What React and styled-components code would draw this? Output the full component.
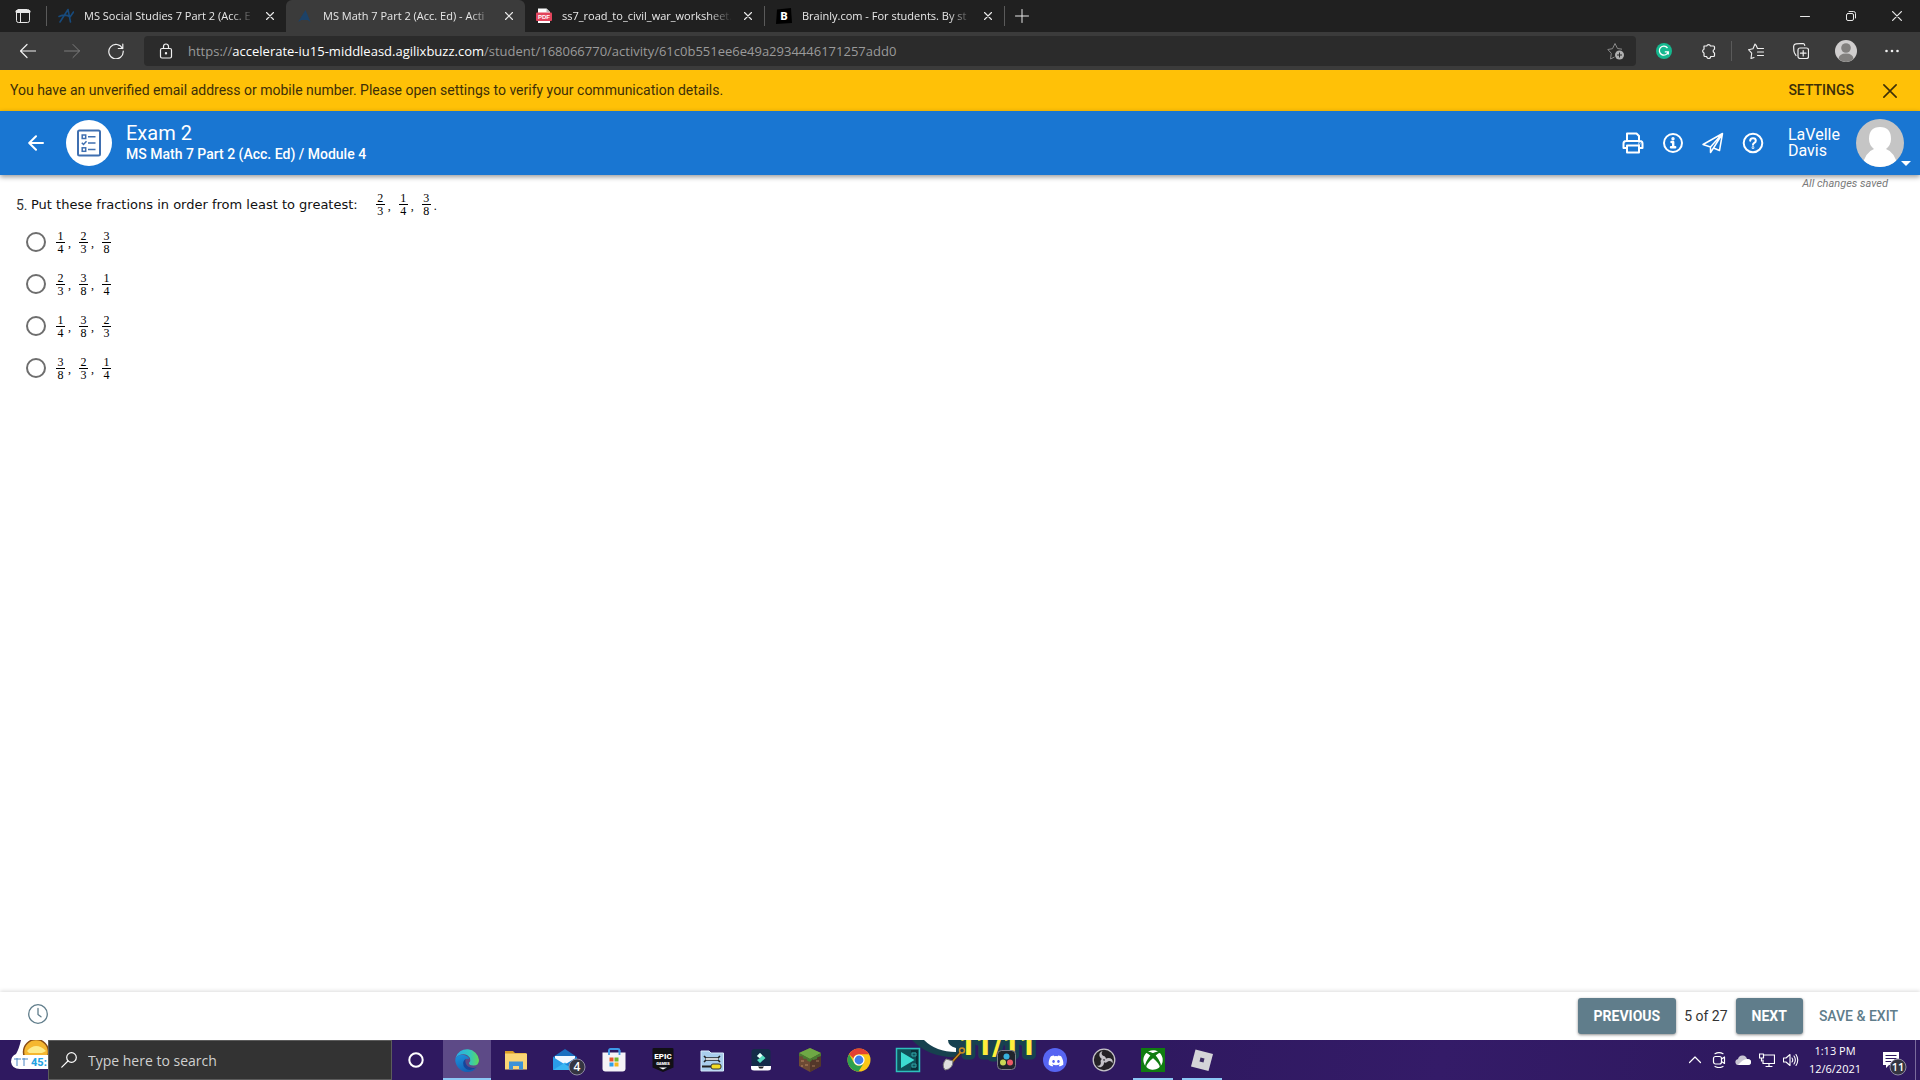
import { useState } from "react";
import styled, { createGlobalStyle } from "styled-components";
import { FaDiscord, FaXbox } from "react-icons/fa";

const colors = {
  strip: "#202020",
  chrome: "#3b3b3b",
  field: "#2b2b2b",
  yellow: "#ffc107",
  blue: "#1976d2",
  slate: "#607d8b",
  purple: "#2f1960",
};

const fonts = {
  system: `"Open Sans", "Noto Sans", sans-serif`,
  app: `Roboto, "Liberation Sans", sans-serif`,
  question: `"DejaVu Sans", sans-serif`,
  math: `"Liberation Serif", serif`,
};

const GlobalStyle = createGlobalStyle`
  * {
    box-sizing: border-box;
  }
  body {
    margin: 0;
    background: white;
    font-family: ${fonts.app};
  }
  button {
    border: 0;
    padding: 0;
    margin: 0;
    background: none;
    color: inherit;
    font: inherit;
    cursor: pointer;
  }
  svg {
    display: block;
  }
`;

const Page = styled.div`
  min-height: 100vh;
  display: flex;
  flex-direction: column;
`;

const IconButton = styled.button`
  width: ${(props) => props.$w || 32}px;
  height: ${(props) => props.$h || 32}px;
  flex: none;
  display: flex;
  align-items: center;
  justify-content: center;
`;

/* Browser */

const TabStrip = styled.div`
  height: 32px;
  display: flex;
  align-items: center;
  background: ${colors.strip};
  color: #e8e8e8;
  font-family: ${fonts.system};
`;
const Tab = styled.div`
  width: 239px;
  height: 32px;
  display: flex;
  align-items: center;
  padding-left: 11px;
  background: ${(props) => (props.$active ? colors.chrome : "transparent")};
  border-radius: ${(props) => (props.$active ? "6px 6px 0 0" : "0")};
`;
const TabTitle = styled.a`
  flex: 1;
  min-width: 0;
  margin-left: 10px;
  white-space: nowrap;
  color: inherit;
  text-decoration: none;
  font-size: 11px;
  line-height: 20px;
  mask-image: linear-gradient(to right, black 86%, transparent 100%);
`;
const Divider = styled.div`
  width: 1px;
  height: 20px;
  flex: none;
  background: #5a5a5a;
`;
const WindowControls = styled.div`
  display: flex;
  margin-left: auto;
`;
const Toolbar = styled.div`
  height: 38px;
  display: flex;
  align-items: center;
  padding-left: 6px;
  background: ${colors.chrome};
  color: #f0f0f0;
`;
const Address = styled.div`
  flex: 1;
  height: 30px;
  display: flex;
  align-items: center;
  margin-left: 6px;
  padding: 0 8px 0 14px;
  border-radius: 4px;
  background: ${colors.field};
`;
const Url = styled.div`
  flex: 1;
  margin-left: 14px;
  color: #9a9a9a;
  font-family: ${fonts.system};
  font-size: 13px;
  line-height: 20px;
  white-space: nowrap;
  b {
    font-weight: 400;
    color: white;
  }
`;
const Extensions = styled.div`
  display: flex;
  align-items: center;
  padding: 0 6px 0 5px;
`;

/* Exam page */

const Notice = styled.div`
  height: 41px;
  display: flex;
  align-items: center;
  padding: 0 14px 0 10px;
  background: ${colors.yellow};
  color: #3d2f08;
  font-size: 14px;
`;
const NoticeText = styled.div`
  flex: 1;
  padding-bottom: 2px;
`;
const SettingsButton = styled.button`
  margin-right: 20px;
  padding-bottom: 2px;
  font-size: 14px;
  font-weight: 500;
`;
const Header = styled.header`
  position: relative;
  height: 64px;
  display: flex;
  align-items: center;
  padding: 0 16px 0 20px;
  background: ${colors.blue};
  color: white;
  box-shadow: 0 2px 5px rgba(0, 0, 0, 0.4);
`;
const ActivityBadge = styled.div`
  width: 46px;
  height: 46px;
  margin: 0 14px;
  border-radius: 50%;
  display: flex;
  align-items: center;
  justify-content: center;
  background: white;
`;
const Headings = styled.div`
  flex: 1;
`;
const Title = styled.h1`
  margin: 0;
  font-size: 20px;
  line-height: 22px;
  font-weight: 400;
`;
const Subtitle = styled.div`
  font-size: 14px;
  line-height: 20px;
  font-weight: 500;
`;
const HeaderActions = styled.div`
  display: flex;
  margin-right: 15px;
`;
const UserName = styled.div`
  width: 68px;
  font-size: 16px;
  line-height: 16px;
`;
const UserButton = styled.button`
  position: relative;
  width: 48px;
  height: 48px;
`;
const Caret = styled.span`
  position: absolute;
  right: -7px;
  bottom: 1px;
  border: 5px solid transparent;
  border-top-color: white;
  border-bottom: 0;
`;
const Content = styled.main`
  flex: 1;
  padding: 0 16px;
`;
const SaveState = styled.div`
  padding-right: 16px;
  text-align: right;
  font-size: 11px;
  line-height: 18px;
  font-style: italic;
  color: #7a7a7a;
`;
const Question = styled.fieldset`
  margin: 0;
  padding: 0;
  border: 0;
`;
const Prompt = styled.legend`
  height: 23px;
  display: flex;
  align-items: center;
  padding: 0;
  font-family: ${fonts.question};
  font-size: 13px;
  color: #111;
  white-space: pre;
`;
const PromptNumber = styled.span`
  width: 15px;
  font-family: ${fonts.app};
  font-size: 14px;
  color: #333;
`;
const PromptMath = styled.span`
  margin-left: 18px;
`;
const Option = styled.label`
  width: max-content;
  height: 42px;
  display: flex;
  align-items: center;
  gap: 10px;
  padding-left: 10px;
`;
const Options = styled.div`
  padding-top: 5px;
`;
const Radio = styled.input`
  appearance: none;
  width: 20px;
  height: 20px;
  margin: 0;
  border: 2px solid #6e6e6e;
  border-radius: 50%;
  &:checked {
    background: radial-gradient(${colors.blue} 5px, transparent 6px);
  }
`;
const MathRow = styled.span`
  display: flex;
  align-items: center;
  font-family: ${fonts.math};
  font-size: 12px;
  line-height: 12px;
  color: black;
`;
const FractionBox = styled.span`
  width: 9px;
  display: flex;
  flex-direction: column;
  text-align: center;
  span:first-child {
    border-bottom: 1px solid black;
  }
`;
const Mark = styled.span`
  width: 14px;
  padding: 2px 0 0 3px;
`;
const Footer = styled.footer`
  height: 48px;
  display: flex;
  align-items: center;
  padding: 0 22px 0 28px;
  box-shadow: 0 -1px 4px rgba(0, 0, 0, 0.14);
  color: ${colors.slate};
  font-size: 14px;
`;
const Timer = styled.div`
  padding-bottom: 4px;
`;
const FooterNav = styled.nav`
  display: flex;
  align-items: center;
  margin-left: auto;
`;
const NavButton = styled.button`
  height: 36px;
  padding: 0 16px;
  border-radius: 3px;
  background: ${colors.slate};
  color: white;
  font-weight: 700;
  box-shadow: 0 1px 3px rgba(0, 0, 0, 0.45);
`;
const Progress = styled.span`
  padding: 0 8px;
  color: #333;
`;
const ExitButton = styled.button`
  margin-left: 16px;
  font-weight: 500;
`;

/* Taskbar */

const Taskbar = styled.div`
  position: relative;
  height: 40px;
  display: flex;
  overflow: hidden;
  background: linear-gradient(100deg, #2f1960 0 60%, #341b68 75%, #2f1960 90%);
  color: white;
  font-family: ${fonts.system};
`;
const Wallpaper = styled.svg`
  position: absolute;
  left: 0;
  top: 0;
`;
const SearchBox = styled.label`
  width: 344px;
  display: flex;
  align-items: center;
  gap: 11px;
  margin-left: 48px;
  padding-left: 12px;
  border: 1px solid #5c5c5c;
  background: #333;
  z-index: 1;
`;
const SearchInput = styled.input`
  width: 280px;
  border: 0;
  padding: 0;
  outline: 0;
  background: none;
  color: white;
  font-family: ${fonts.system};
  font-size: 14px;
  &::placeholder {
    color: #d0d0d0;
  }
`;
const Apps = styled.div`
  display: flex;
  gap: 1px;
  z-index: 1;
`;
const AppButton = styled.button`
  width: 48px;
  height: 40px;
  display: flex;
  align-items: center;
  justify-content: center;
  background: ${(props) => (props.$active ? "#5d4a87" : "none")};
  box-shadow: ${(props) => (props.$active ? "inset 0 -2px #8cc8f5" : "none")};
`;
const RunningMark = styled.span`
  width: 40px;
  height: 40px;
  display: flex;
  align-items: center;
  justify-content: center;
  box-shadow: inset 0 -2px #8cc8f5;
`;
const Cortana = styled(AppButton)`
  margin-right: 2px;
`;
const Tray = styled.div`
  display: flex;
  align-items: center;
  margin-left: auto;
  z-index: 1;
`;
const Clock = styled.div`
  width: 64px;
  text-align: center;
  font-size: 11px;
  line-height: 18px;
`;
const ShowDesktop = styled.button`
  width: 5px;
  height: 40px;
  border-left: 1px solid #7a6a9c;
`;

const Line = ({ size = 16, box = 16, w = 1, children, color = "currentColor" }) => (
  <svg
    width={size}
    height={size}
    viewBox={`0 0 ${box} ${box}`}
    fill="none"
    stroke={color}
    strokeWidth={w}
    strokeLinecap="round"
    strokeLinejoin="round"
    aria-hidden="true"
  >
    {children}
  </svg>
);

const Cross = ({ size = 8, w = 1 }) => (
  <Line size={size} box={8} w={w}>
    <path d="M0.5 0.5l7 7M7.5 0.5l-7 7" />
  </Line>
);

const AccelerateIcon = () => (
  <Line color="#174a7c" w={1.6}>
    <path d="M2 14L10 1.5L12.5 14M1 8.5Q8 5.5 12 9M12 9L15.5 4" />
  </Line>
);
const AccelerateSolidIcon = () => (
  <svg width="16" height="16" viewBox="0 0 16 16">
    <path d="M1 14L8.5 2L13.5 14L10.5 12L4.5 12Z" fill="#1c4268" />
  </svg>
);
const PdfIcon = () => (
  <svg width="16" height="16" viewBox="0 0 16 16">
    <path d="M2 0.5H10.5L14 4V15H2Z" fill="#fff" />
    <path d="M10.5 0.5V4H14Z" fill="#bbb" />
    <rect y="4.5" width="16" height="8.5" rx="1" fill="#e2445c" />
    <text x="8" y="11" textAnchor="middle" fontSize="6" fontWeight="700" fontFamily="Liberation Sans" fill="#fff">
      PDF
    </text>
  </svg>
);
const BrainlyIcon = () => (
  <svg width="16" height="16" viewBox="0 0 16 16">
    <path d="M1 1.5L15 0L16 15L0 16Z" fill="#000" />
    <text x="8" y="12" textAnchor="middle" fontSize="11" fontWeight="900" fontFamily="Roboto" fill="#fff">
      B
    </text>
  </svg>
);

const tabs = [
  { title: "MS Social Studies 7 Part 2 (Acc. E", icon: <AccelerateIcon /> },
  { title: "MS Math 7 Part 2 (Acc. Ed) - Acti", icon: <AccelerateSolidIcon />, active: true },
  { title: "ss7_road_to_civil_war_worksheet.", icon: <PdfIcon /> },
  { title: "Brainly.com - For students. By st", icon: <BrainlyIcon />, divided: true },
];

function Browser() {
  return (
    <>
      <TabStrip>
        <IconButton $w={46} aria-label="Tab actions">
          <Line>
            <rect x="1.5" y="1.5" width="13" height="13" rx="2" />
            <path d="M2 3.5H14" strokeWidth="3" />
            <path d="M5.5 5V14" />
          </Line>
        </IconButton>
        <Divider />
        {tabs.map((tab) => [
          tab.divided && <Divider key="divider" />,
          <Tab key={tab.title} $active={tab.active}>
            {tab.icon}
            <TabTitle href="#">{tab.title}</TabTitle>
            <IconButton aria-label={`Close ${tab.title}`}>
              <Cross w={1.2} />
            </IconButton>
          </Tab>,
        ])}
        <Divider />
        <IconButton $w={34} aria-label="New tab">
          <Line>
            <path d="M8 1.5V14.5M1.5 8H14.5" />
          </Line>
        </IconButton>
        <WindowControls>
          <IconButton $w={46} aria-label="Minimize">
            <Line size={10} box={10}>
              <path d="M0.5 5.5H9.5" />
            </Line>
          </IconButton>
          <IconButton $w={46} aria-label="Restore">
            <Line size={10} box={10}>
              <rect x="0.5" y="2.5" width="7" height="7" rx="1.5" />
              <path d="M3 0.5H7.5Q9.5 0.5 9.5 2.5V7" />
            </Line>
          </IconButton>
          <IconButton $w={46} aria-label="Close window">
            <Cross size={10} />
          </IconButton>
        </WindowControls>
      </TabStrip>
      <Toolbar>
        <IconButton $w={44} aria-label="Back">
          <Line w={1.2}>
            <path d="M15.5 8H0.5M7 1.5L0.5 8L7 14.5" />
          </Line>
        </IconButton>
        <IconButton $w={44} aria-label="Forward">
          <Line color="#7d7d7d">
            <path d="M0.5 8H15.5M9 1.5L15.5 8L9 14.5" />
          </Line>
        </IconButton>
        <IconButton $w={44} aria-label="Refresh">
          <Line w={1.2}>
            <path d="M14.5 5.5A7.2 7.2 0 1 0 15.2 8M14.8 1V5.5H10.3" />
          </Line>
        </IconButton>
        <Address>
          <Line w={1.2}>
            <rect x="2.5" y="5.5" width="11" height="9.5" rx="1.5" />
            <path d="M5.5 5.5V3.5A2.5 2.5 0 0 1 10.5 3.5V5.5" />
            <circle cx="8" cy="10.3" r="0.6" fill="currentColor" />
          </Line>
          <Url role="textbox" aria-label="Address">
            https://<b>accelerate-iu15-middleasd.agilixbuzz.com</b>
            /student/168066770/activity/61c0b551ee6e49a2934446171257add0
          </Url>
          <IconButton aria-label="Add to favorites" $w={24}>
            <svg width="18" height="18" viewBox="0 0 18 18" fill="none">
              <path
                d="M7.5 15L3.5 17L4.3 11.3L0.8 7.5L5.5 6.7L8 1.5L10.5 6.5L15 7.2"
                stroke="#8a8a8a"
                strokeLinejoin="round"
              />
              <circle cx="12.5" cy="13" r="4.5" fill="#b0b0b0" />
              <path d="M12.5 10.5V15.5M10 13H15" stroke="#2b2b2b" />
            </svg>
          </IconButton>
        </Address>
        <Extensions>
          <IconButton $w={46} aria-label="Grammarly">
            <svg width="16" height="16" viewBox="0 0 16 16" fill="none">
              <circle cx="8" cy="8" r="8" fill="#15b88f" />
              <path d="M11.5 5A4.5 4.5 0 1 0 12.2 8.8H8.8M12.3 8.8V11.5" stroke="#fff" strokeWidth="1.3" />
            </svg>
          </IconButton>
          <IconButton $w={44} aria-label="Extensions">
            <Line w={1.2}>
              <path d="M3 3H5.7A2 2 0 0 1 9.5 3H12.5Q13.5 3 13.5 4V6.2A2 2 0 0 0 13.5 10V12.500Q13.5 13.5 12.5 13.5H9.700A2 2 0 0 1 5.7 13.5H4Q3 13.5 3 12.5V10A2 2 0 0 1 3 6.200Z" />
            </Line>
          </IconButton>
          <Divider />
          <IconButton $w={48} aria-label="Favorites">
            <Line w={1.1}>
              <path d="M8 2L9.5 5.5H15.5M6 14.5L3 15.5L3.7 10.2L0.5 6.7L5 5.7L7 1L8 2.5M9.5 9H15.5M9.5 12.5H15.5" />
            </Line>
          </IconButton>
          <IconButton $w={42} aria-label="Collections">
            <Line w={1.2}>
              <rect x="5" y="5" width="10.5" height="10.5" rx="2" />
              <path d="M10.2 7.5V13M7.5 10.2H13M3 12.5L1.5 10Q0.5 8 0.7 3Q1 1 3 0.9L9.5 0.5Q11.5 0.5 11.8 2.5" />
            </Line>
          </IconButton>
          <IconButton $w={48} aria-label="Profile">
            <svg width="22" height="22" viewBox="0 0 22 22">
              <circle cx="11" cy="11" r="11" fill="#d0cece" />
              <circle cx="11" cy="8" r="4.8" fill="#82807e" />
              <path d="M3.5 19Q4 13.5 11 13.5T18.5 19Q15 22 11 22T3.5 19Z" fill="#82807e" />
            </svg>
          </IconButton>
          <IconButton $w={44} aria-label="Settings and more">
            <svg width="16" height="4" viewBox="0 0 16 4" fill="#f0f0f0">
              <circle cx="2.5" cy="2" r="1.3" />
              <circle cx="8" cy="2" r="1.3" />
              <circle cx="13.5" cy="2" r="1.3" />
            </svg>
          </IconButton>
        </Extensions>
      </Toolbar>
    </>
  );
}

const Fraction = ({ value }) => {
  const [top, bottom] = value.split("/");
  return (
    <FractionBox>
      <span>{top}</span>
      <span>{bottom}</span>
    </FractionBox>
  );
};

const FractionList = ({ values, end }) => (
  <MathRow>
    {values.map((value, i) => [
      <Fraction key={value} value={value} />,
      i < values.length - 1 && <Mark key={i}>,</Mark>,
    ])}
    {end && <Mark>{end}</Mark>}
  </MathRow>
);

const answers = [
  ["1/4", "2/3", "3/8"],
  ["2/3", "3/8", "1/4"],
  ["1/4", "3/8", "2/3"],
  ["3/8", "2/3", "1/4"],
];

function Exam() {
  const [answer, setAnswer] = useState();
  return (
    <>
      <Notice>
        <NoticeText>
          You have an unverified email address or mobile number. Please open settings to verify your communication
          details.
        </NoticeText>
        <SettingsButton>SETTINGS</SettingsButton>
        <IconButton aria-label="Dismiss">
          <Cross size={14} w={0.9} />
        </IconButton>
      </Notice>
      <Header>
        <IconButton aria-label="Back to course">
          <Line w={2}>
            <path d="M15 8H1.5M8 1.2L1.2 8L8 14.8" />
          </Line>
        </IconButton>
        <ActivityBadge>
          <svg width="24" height="28" viewBox="0 0 24 28" fill="none" stroke="#3f6fb0" strokeWidth="1.5">
            <rect x="1" y="1.5" width="22" height="25" rx="1.5" strokeWidth="2" />
            <rect x="5.2" y="6" width="3.5" height="3.5" />
            <path d="M11 7.7H18.5M11 14H18.5M11 20.5H18.5M4.8 13.7L6.5 15.5L9.5 12.2" />
            <rect x="5.2" y="18.8" width="3.5" height="3.5" />
          </svg>
        </ActivityBadge>
        <Headings>
          <Title>Exam 2</Title>
          <Subtitle>MS Math 7 Part 2 (Acc. Ed) / Module 4</Subtitle>
        </Headings>
        <HeaderActions>
          <IconButton $w={40} aria-label="Print">
            <Line size={22} box={22} w={2}>
              <path d="M5 9V1.5H14.5L17 4V9M5 16H1.5V11.5Q1.5 9 4 9H18Q20.5 9 20.5 11.5V16H17" />
              <path d="M5 13.5H17V20.5H5Z" />
              <circle cx="17.2" cy="11.5" r="0.3" />
            </Line>
          </IconButton>
          <IconButton $w={40} aria-label="Information">
            <Line size={22} box={22} w={2}>
              <circle cx="11" cy="11" r="9" />
              <path d="M9.5 10H11.2V15M9 15.2H13.2" strokeWidth="2.4" />
              <circle cx="11" cy="6.7" r="0.7" fill="white" />
            </Line>
          </IconButton>
          <IconButton $w={40} aria-label="Send">
            <Line size={22} box={22} w={1.5}>
              <path d="M1 12.5L20.5 1.5L17.5 18.5L11.5 16L8.5 20.5V15L1 12.5ZM8.5 15L20.5 1.5L11.5 16" />
            </Line>
          </IconButton>
          <IconButton $w={40} aria-label="Help">
            <Line size={22} box={22} w={2}>
              <circle cx="11" cy="11" r="9.3" />
              <path d="M8.2 8.7Q8.4 6.3 11 6.3Q13.8 6.3 13.8 8.7Q13.8 10 12.3 10.9Q11 11.7 11 12.8" />
              <circle cx="11" cy="15.7" r="0.4" />
            </Line>
          </IconButton>
        </HeaderActions>
        <UserName>LaVelle Davis</UserName>
        <UserButton aria-label="User menu">
          <svg width="48" height="48" viewBox="0 0 48 48">
            <clipPath id="user">
              <circle cx="24" cy="24" r="24" />
            </clipPath>
            <g clipPath="url(#user)">
              <rect width="48" height="48" fill="#c5c5c5" />
              <path d="M24 8Q35 8 35 20Q35 26 30 30Q39 33 42 48H6Q9 33 18 30Q13 26 13 20Q13 8 24 8Z" fill="#fff" />
            </g>
          </svg>
          <Caret />
        </UserButton>
      </Header>
      <Content>
        <SaveState>All changes saved</SaveState>
        <Question>
          <Prompt>
            <PromptNumber>5.</PromptNumber>
            Put these fractions in order from least to greatest:
            <PromptMath>
              <FractionList values={["2/3", "1/4", "3/8"]} end="." />
            </PromptMath>
          </Prompt>
          <Options>
            {answers.map((values, i) => (
              <Option key={values.join()}>
                <Radio type="radio" name="answer" checked={answer === i} onChange={() => setAnswer(i)} />
                <FractionList values={values} />
              </Option>
            ))}
          </Options>
        </Question>
      </Content>
      <Footer>
        <Timer>
          <Line size={20} box={20} w={1.3}>
            <circle cx="10" cy="10" r="9.3" />
            <path d="M10 4.5V10.5L13 12.8" />
          </Line>
        </Timer>
        <FooterNav>
          <NavButton>PREVIOUS</NavButton>
          <Progress>5 of 27</Progress>
          <NavButton>NEXT</NavButton>
          <ExitButton>SAVE &amp; EXIT</ExitButton>
        </FooterNav>
      </Footer>
    </>
  );
}

/* Taskbar icons, all on a 24px grid */

const Glyph = ({ children }) => (
  <svg width="24" height="24" viewBox="0 0 24 24" fill="none" overflow="visible">
    {children}
  </svg>
);

const EdgeIcon = () => (
  <Glyph>
    <defs>
      <linearGradient id="edgeTop" x1="0" y1="0.5" x2="1" y2="0.5">
        <stop offset="0" stopColor="#2aa8e8" />
        <stop offset="0.6" stopColor="#31c6c0" />
        <stop offset="1" stopColor="#5fda58" />
      </linearGradient>
      <linearGradient id="edgeSide" x1="0" y1="0" x2="0.5" y2="1">
        <stop offset="0" stopColor="#1c93de" />
        <stop offset="1" stopColor="#1360b4" />
      </linearGradient>
    </defs>
    <path
      d="M0.5 10A12 12 0 0 1 24 12Q24 17.5 18.5 17.5Q14 17.5 14 15Q16 13 15 10Q12 5 6 6.5Q2 7.5 0.5 10Z"
      fill="url(#edgeTop)"
    />
    <path
      d="M0.5 10Q4 6 9 7Q14 8.5 14 11Q10 9.5 9 14Q9 20 17 21.5Q20 21.5 22 19.5Q18 24 12 24A12 12 0 0 1 0.5 10Z"
      fill="url(#edgeSide)"
    />
    <path d="M10.5 10.8Q6 15 10 20Q14 24.5 22 19.3Q17 21 13 18.5Q9.5 16 10.5 10.8Z" fill="#17459b" />
  </Glyph>
);
const FolderIcon = () => (
  <Glyph>
    <path d="M1 3H9L11 5H22V8H1Z" fill="#d99b25" />
    <rect x="1" y="5.5" width="22" height="16" fill="#fbd575" />
    <path d="M5 13.5H19V21.5H15V18H9V21.5H5Z" fill="#3c92d8" />
  </Glyph>
);
const MailIcon = () => (
  <Glyph>
    <path d="M0 9L12 1L24 9V22H0Z" fill="#1a6fc0" />
    <path d="M2 8H22V14L12 20L2 14Z" fill="#f2f8ff" />
    <path d="M0 9L12 16.5L0 22Z" fill="#2a9ce8" />
    <path d="M0 22L12 14.5L24 22Z" fill="#39b5f2" />
    <path d="M24 9L12 16.5L24 22Z" fill="#1c83d6" />
    <circle cx="24" cy="19" r="8" fill="#353541" stroke="#8e89a3" />
    <text x="24" y="23" textAnchor="middle" fontSize="12" fontWeight="600" fontFamily="Open Sans" fill="#fff">
      4
    </text>
  </Glyph>
);
const StoreIcon = () => (
  <Glyph>
    <path d="M7 6V2.5Q7 1 8.5 1H16Q17.5 1 17.5 2.5V6" stroke="#3d9be9" strokeWidth="1.8" />
    <path d="M0.5 4.5H23.5V20.5Q23.5 23.5 20.5 23.5H3.5Q0.5 23.5 0.5 20.5Z" fill="#f5f3f7" />
    <path d="M7 2V7M17.5 2V7" stroke="#3d9be9" strokeWidth="1.8" />
    <path d="M7.5 9.5H11.5V13.5H7.5Z" fill="#e8562a" />
    <path d="M12.5 9.5H16.5V13.5H12.5Z" fill="#74b72b" />
    <path d="M7.5 14.5H11.5V18.5H7.5Z" fill="#2f9fe8" />
    <path d="M12.5 14.5H16.5V18.5H12.5Z" fill="#f7b81c" />
  </Glyph>
);
const EpicIcon = () => (
  <Glyph>
    <path d="M1.5 1Q1.5 0 3 0H21Q22.5 0 22.5 1V19.5L12 24L1.5 19.5Z" fill="#111015" />
    <text x="12" y="11" textAnchor="middle" fontSize="8" fontWeight="900" fontFamily="Roboto" fill="#fff">
      EPIC
    </text>
    <text x="12" y="17" textAnchor="middle" fontSize="4" fontWeight="900" fontFamily="Roboto" fill="#fff">
      GAMES
    </text>
    <path d="M8 19.500H16L12 21.500Z" fill="#fff" />
  </Glyph>
);
const ToolsIcon = () => (
  <Glyph>
    <path d="M1 5V3H9L11 5H23.5V23H1Z" fill="#a9cdec" stroke="#d8ecfa" />
    <path d="M4 8L6 10H18L20 8M4 14L6 12H18L20 14" stroke="#222" strokeWidth="1.6" />
    <path d="M6 11H18" stroke="#fff" strokeWidth="1.5" />
    <path d="M2 18.5H12" stroke="#222" strokeWidth="2" />
    <rect x="11" y="16" width="10" height="5" rx="2" fill="#f3dc25" stroke="#333" />
  </Glyph>
);
const FilmoraIcon = () => (
  <Glyph>
    <rect x="2.5" y="1" width="19" height="18" rx="3" fill="#142c48" />
    <path d="M8 8L11 5L16.5 10L11 15L8 12L11 10Z" fill="#57dfbf" />
    <path d="M8 8L11 5L13.5 7.5L10.5 10.3Z" fill="#e9fff9" />
    <path d="M2 18H22V20Q22 22.5 19 22.5H5Q2 22.5 2 20Z" fill="#fff" />
    <path d="M9 18.5H15L13.5 20.5H10.5Z" fill="#222" />
  </Glyph>
);
const MinecraftIcon = () => (
  <Glyph>
    <path d="M12 0L23 5V18L12 24L1 18V5Z" fill="#6d4a34" />
    <path d="M12 11V24L23 18V5Z" fill="#53372a" />
    <path d="M12 0L23 5L12 11L1 5Z" fill="#6ea845" />
    <path
      d="M1 5L12 11L23 5V8L19 9.5V11L15 12V11L12 14L9 12.5V11L5 10.5V8.5L1 8Z"
      fill="#487a31"
    />
    <path d="M3 12H6V14H3ZM7 16H10V18H7ZM3 17H5V19H3Z" fill="#93694b" />
    <path d="M14 17H17V19H14ZM18 12H21V14H18Z" fill="#7a5640" />
  </Glyph>
);
const ChromeIcon = () => (
  <Glyph>
    <circle cx="12" cy="12" r="11.5" fill="#fbc815" />
    <path d="M2.04 6.25A11.5 11.5 0 0 1 21.96 6.25H12A5.75 5.75 0 0 0 6.5 10.3Z" fill="#e34133" />
    <path d="M2.04 6.25A11.5 11.5 0 0 0 11.5 23.5L16.9 15A5.75 5.75 0 0 1 7 14.8Z" fill="#2da04e" />
    <circle cx="12" cy="12" r="5.6" fill="#fff" />
    <circle cx="12" cy="12" r="4.4" fill="#3f7ee8" />
  </Glyph>
);
const VsdcIcon = () => (
  <Glyph>
    <rect x="0.5" y="0.5" width="23" height="23" fill="#0f4f58" stroke="#2ec0bd" strokeWidth="1.5" />
    <path d="M15 3H21V21H15" stroke="#0a2f38" strokeWidth="2" />
    <path d="M16 5H20V8H16ZM16 16H20V19H16Z" stroke="#2ea5a5" />
    <path d="M5 4L18.5 12L5 20Z" fill="#3ddbd2" />
  </Glyph>
);
const ShovelIcon = () => (
  <Glyph>
    <path d="M7 14L16 4" stroke="#4a2d0c" strokeWidth="3" />
    <path d="M7 14L16 4" stroke="#c88a24" strokeWidth="1.5" />
    <circle cx="17" cy="2.5" r="2.5" stroke="#c88a24" strokeWidth="1.5" />
    <path d="M1 11L8 13Q8 21 0 22Q-4 17 1 11Z" fill="#dedede" stroke="#777" />
  </Glyph>
);
const ResolveIcon = () => (
  <Glyph>
    <rect x="3.5" y="2.5" width="18" height="19" rx="4" fill="#20242c" stroke="#7d7f8a" />
    <circle cx="12.500" cy="8.500" r="3" fill="#38b1dd" />
    <circle cx="9" cy="14.500" r="3" fill="#c9d855" />
    <circle cx="16" cy="14.500" r="3" fill="#ec5a67" />
  </Glyph>
);
const DiscordIcon = () => (
  <Glyph>
    <circle cx="12" cy="12" r="12" fill="#5765f2" />
    <FaDiscord x="5" y="5" width="14" height="14" color="#fff" />
  </Glyph>
);
const ObsIcon = () => (
  <Glyph>
    <circle cx="12" cy="12" r="10.8" fill="#252226" stroke="#c5c2c8" strokeWidth="1.3" />
    {[0, 120, 240].map((angle) => (
      <path
        key={angle}
        transform={`rotate(${angle} 12 12)`}
        d="M11 11.500Q6.500 9.500 7.500 5.500Q8.300 3.500 10.500 3Q8.500 6 11 7.800Q14.500 8.500 14 12.500Q13 10.500 11 11.500Z"
        fill="#c5c2c8"
      />
    ))}
  </Glyph>
);
const XboxIcon = () => (
  <Glyph>
    <rect width="24" height="24" fill="#107c10" />
    <FaXbox x="2" y="2" width="20" height="20" size={20} color="#fff" />
  </Glyph>
);
const RobloxIcon = () => (
  <Glyph>
    <path d="M5.5 1.5L23 6L18.5 23L1 18.5Z" fill="#d4d4d8" />
    <path d="M10.5 9.5L14.5 10.5L13.5 14.5L9.5 13.5Z" fill="#3b2b63" />
  </Glyph>
);

const apps = [
  { name: "Microsoft Edge", icon: <EdgeIcon />, active: true },
  { name: "File Explorer", icon: <FolderIcon /> },
  { name: "Mail", icon: <MailIcon /> },
  { name: "Microsoft Store", icon: <StoreIcon /> },
  { name: "Epic Games", icon: <EpicIcon /> },
  { name: "Tools", icon: <ToolsIcon /> },
  { name: "Filmora", icon: <FilmoraIcon /> },
  { name: "Minecraft", icon: <MinecraftIcon /> },
  { name: "Chrome", icon: <ChromeIcon /> },
  { name: "Video editor", icon: <VsdcIcon /> },
  { name: "Shovel", icon: <ShovelIcon /> },
  { name: "DaVinci Resolve", icon: <ResolveIcon /> },
  { name: "Discord", icon: <DiscordIcon /> },
  { name: "OBS Studio", icon: <ObsIcon /> },
  { name: "Xbox", icon: <XboxIcon />, running: true },
  { name: "Roblox", icon: <RobloxIcon />, running: true },
];

function WindowsTaskbar() {
  return (
    <Taskbar>
      <Wallpaper width="1100" height="40" viewBox="0 0 1100 40">
        <path d="M21 0Q19 9 16 14Q11 16 11 22Q12 29 20 29H60V0Z" fill="#fff" />
        <circle cx="36" cy="12" r="12.5" fill="#f5b730" stroke="#8a4d16" strokeWidth="1.5" />
        <path d="M27 11Q36 1 46 11L42 13H29Z" fill="#fdeb8a" />
        <rect x="12" y="15" width="48" height="13" rx="6" fill="#fff" />
        <path d="M14 19H21M17 18V26M22 19H28M24 18V26" stroke="#4a86c4" />
        <text x="31" y="26" fontSize="11" fontWeight="800" fontFamily="Roboto" fill="#24a3e3">
          45:
        </text>
        <path d="M912 0Q930 19 960 17L962 0Z" fill="#17414f" />
        <path d="M924 0Q936 12 956 12V8Q948 6 948 0Z" fill="#fff" />
        <text
          x="959"
          y="15"
          fontSize="29"
          fontWeight="900"
          fontFamily="Roboto"
          fill="#ffee3b"
          stroke="#17414f"
          strokeWidth="9"
          strokeLinejoin="round"
          paintOrder="stroke"
        >
          11/11
        </text>
      </Wallpaper>
      <SearchBox>
        <Line w={1.2}>
          <circle cx="10.5" cy="5.5" r="4.8" />
          <path d="M7 9L0.8 15.2" />
        </Line>
        <SearchInput placeholder="Type here to search" aria-label="Type here to search" />
      </SearchBox>
      <Apps>
        <Cortana aria-label="Cortana">
          <Line w={2}>
            <circle cx="8" cy="8" r="6.7" />
          </Line>
        </Cortana>
        {apps.map((app) => (
          <AppButton key={app.name} $active={app.active} aria-label={app.name}>
            {app.running ? <RunningMark>{app.icon}</RunningMark> : app.icon}
          </AppButton>
        ))}
      </Apps>
      <Tray>
        <IconButton $w={24} aria-label="Show hidden icons">
          <Line w={1.2}>
            <path d="M2.5 10.5L8 5L13.5 10.5" />
          </Line>
        </IconButton>
        <IconButton $w={24} aria-label="Meet now">
          <Line w={1.2}>
            <rect x="2.5" y="4.5" width="8" height="7.5" rx="2" />
            <path d="M10.5 7L13.5 5V11.5L10.5 9.5M4 1.7Q8 -0.5 12 1.7M4 14.5Q8 16.7 12 14.5" />
          </Line>
        </IconButton>
        <IconButton $w={24} aria-label="OneDrive">
          <svg width="16" height="16" viewBox="0 0 16 16">
            <path d="M1 12Q-1 8 3 7Q4 3 8 3.5Q11 3.5 12 7Q16 7 16 10Q16 13 13 13H3Q1.5 13 1 12Z" fill="#c9c5d3" />
            <path d="M3 13Q8 7 12 7Q16 7 16 10Q16 13 13 13Z" fill="#fff" />
          </svg>
        </IconButton>
        <IconButton $w={24} aria-label="Network">
          <Line w={1.2}>
            <path d="M5.5 3H15.5V11.5H4V8M10 11.5V14.5M7 14.5H13M0.5 2H4.5V6H0.5ZM2.5 6V9" />
          </Line>
        </IconButton>
        <IconButton $w={24} aria-label="Volume">
          <Line w={1.1}>
            <path d="M0.5 6H3L7 2.5V13.5L3 10H0.5ZM9 6Q10.5 8 9 10M11 4Q13.7 8 11 12M13 2.5Q16.5 8 13 13.5" />
          </Line>
        </IconButton>
        <Clock>
          <div>1:13 PM</div>
          <div>12/6/2021</div>
        </Clock>
        <IconButton $w={48} aria-label="Notifications, 11 new">
          <svg width="24" height="24" viewBox="0 0 24 24" overflow="visible">
            <path d="M4 4H20V17H10L7 20V17H4Z" fill="#fff" />
            <path d="M6.5 7.5H17.5M6.5 10.5H17.5M6.5 13.5H12" stroke="#2f1960" />
            <circle cx="19" cy="19" r="8" fill="#353541" stroke="#8e89a3" />
            <text x="19" y="23" textAnchor="middle" fontSize="11" fontWeight="600" fontFamily="Open Sans" fill="#fff">
              11
            </text>
          </svg>
        </IconButton>
        <ShowDesktop aria-label="Show desktop" />
      </Tray>
    </Taskbar>
  );
}

export default function App() {
  return (
    <Page>
      <GlobalStyle />
      <Browser />
      <Exam />
      <WindowsTaskbar />
    </Page>
  );
}
